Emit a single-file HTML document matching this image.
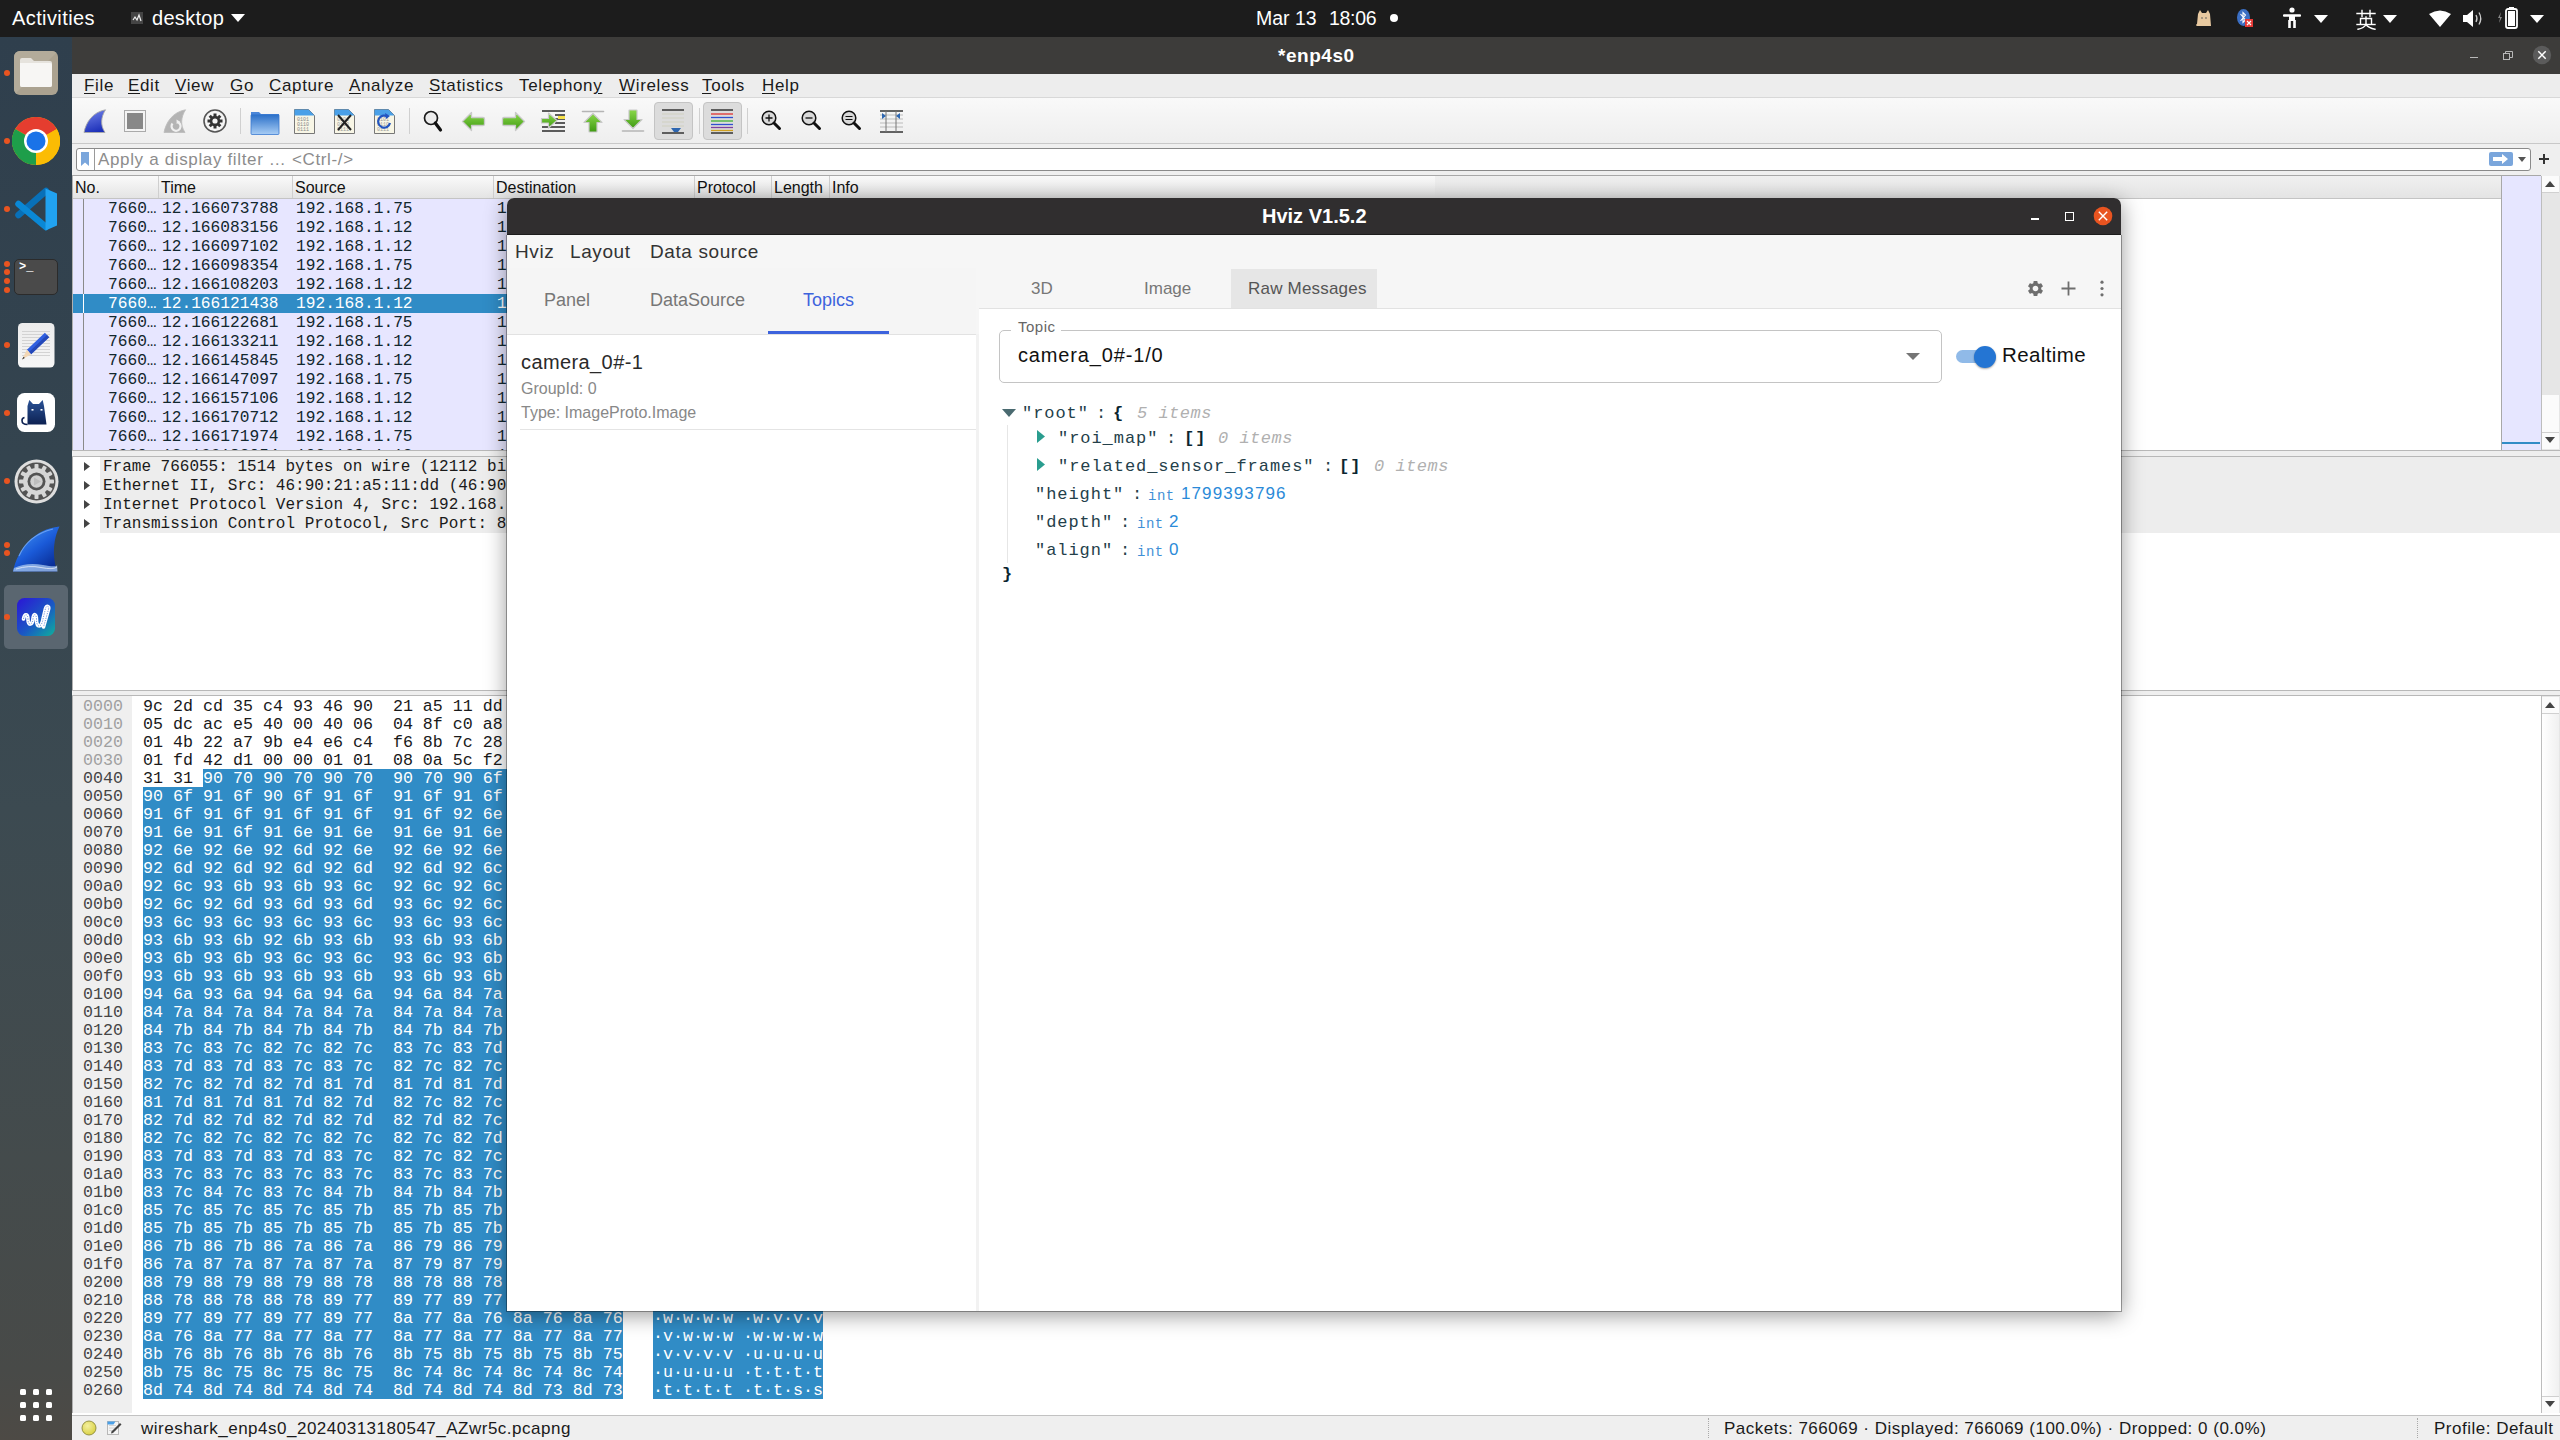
<!DOCTYPE html>
<html><head><meta charset="utf-8"><title>recreation</title>
<style>
*{margin:0;padding:0;box-sizing:border-box}
html,body{width:2560px;height:1440px;overflow:hidden;background:#fff;font-family:"Liberation Sans",sans-serif}
.abs{position:absolute}
/* top bar */
#topbar{position:absolute;left:0;top:0;width:2560px;height:37px;background:#1c1c1c;color:#fff}
#topbar .t{position:absolute;font-size:20px;line-height:37px;top:0;white-space:nowrap}
/* dock */
#dock{position:absolute;left:0;top:37px;width:72px;height:1403px;background:linear-gradient(#2f3f4d 0%,#34444f 30%,#3c4a51 55%,#444b4c 80%,#484a48 95%,#4d4a45 100%)}
.dot{position:absolute;width:6px;height:6px;border-radius:3px;background:#e95420;left:4px}
/* wireshark */
#ws{position:absolute;left:72px;top:37px;width:2488px;height:1403px;background:#fff}
#wstitle{position:absolute;left:0;top:0;width:2488px;height:37px;background:#3d3c3a;color:#fff;font-weight:bold;font-size:20px;text-align:center;line-height:37px}
#wsmenu{position:absolute;left:0;top:37px;width:2488px;height:24px;background:#ededed;border-bottom:1px solid #d8d8d8}
#wsmenu span{position:absolute;top:0;font-size:17px;letter-spacing:0.65px;line-height:24px;color:#1a1a1a;white-space:nowrap}
#wsmenu u{text-decoration:underline;text-decoration-thickness:1px;text-underline-offset:2px}
#wstool{position:absolute;left:0;top:61px;width:2488px;height:46px;background:linear-gradient(#f9f9f9,#eeeeee);border-bottom:1px solid #c8c8c8}
#wsfilter{position:absolute;left:0;top:107px;width:2488px;height:32px;background:#efefef}
.prow{position:absolute;left:0;width:1363px;height:19px;background:#e7e6ff;color:#12272e;font-family:"Liberation Mono",monospace;font-size:16.2px;line-height:19px;white-space:pre}
.prow.sel{background:#308cc6;color:#fff}
.prow span{position:absolute;top:1px}
.pn{left:35px}.pt{left:89px}.ps{left:223px}.pd{left:424px}
.hrow{position:absolute;left:72px;height:18px;font-family:"Liberation Mono",monospace;font-size:16.67px;line-height:18px;white-space:pre;color:#1a1a1a}
.hrow span{position:absolute;top:0}
.ho{left:11px;color:#454545}
.hol{color:#a0a0a0}
.hb{left:71px}
.hs{background:#308cc6;color:#fff;display:inline-block;height:18px;line-height:20px;vertical-align:top}
.hx{display:inline-block;height:18px;line-height:20px;vertical-align:top}
.as{left:581px;background:#308cc6;color:#fff;height:18px;line-height:20px}
.ho{line-height:20px}
.hb span{position:static !important}
/* hviz */
#hv{position:absolute;left:507px;top:198px;width:1614px;height:1113px;background:#fff;border-radius:7px 7px 0 0;box-shadow:0 4px 22px rgba(0,0,0,.42)}
#hvtitle{position:absolute;left:0;top:0;width:1614px;height:37px;background:#302e2f;border-radius:7px 7px 0 0;color:#fff;font-weight:bold;font-size:20px;text-align:center;line-height:37px}
.ph{position:absolute;top:177px;line-height:22px;font-size:16px;color:#111;white-space:nowrap}
.drow{position:absolute;left:103px;height:19px;line-height:19px;font-family:"Liberation Mono",monospace;font-size:16px;color:#1a1a1a;white-space:pre}
.st{position:absolute;top:1415px;line-height:27px;font-size:17px;letter-spacing:0.5px;color:#1a1a1a;white-space:nowrap}
.hm{position:absolute;top:235px;line-height:33px;font-size:19px;color:#333;white-space:nowrap;letter-spacing:0.6px}
.ht{position:absolute;font-size:18px;color:#777;white-space:nowrap}
.jl{position:absolute;font-family:"Liberation Mono",monospace;font-size:17.5px;line-height:22px;color:#2b3a42;white-space:pre;letter-spacing:0.6px}
.jl b{color:#111;font-weight:bold}
.jl i{color:#aaa;font-style:italic}
.ti{font-size:14px;color:#3a8ad0;letter-spacing:0.3px}
.tv{color:#2b8ad8}

.jk{position:absolute;font-family:"Liberation Mono",monospace;font-size:17px;line-height:16px;color:#24404a;white-space:pre;letter-spacing:0.95px}
.jb{color:#0b2530;font-weight:bold}
.ji{color:#b0b0b0;font-style:italic;letter-spacing:0.5px}
.jint{position:absolute;font-family:"Liberation Mono",monospace;font-size:14px;line-height:12px;color:#3f8fd6;letter-spacing:0.5px;white-space:pre}
.jv{position:absolute;font-family:"Liberation Sans",sans-serif;font-size:17px;line-height:16px;color:#2a8ad8;letter-spacing:1.1px;white-space:pre}

</style></head><body>
<div id="topbar">
  <div class="t" style="left:12px;letter-spacing:0.4px">Activities</div>
  <svg class="abs" style="left:131px;top:12px" width="12" height="12"><rect width="12" height="12" fill="#444"/><path d="M2 8l2-3 2 3 2-5 2 6" stroke="#eee" stroke-width="1.2" fill="none"/></svg>
  <div class="t" style="left:152px;letter-spacing:0.3px">desktop</div>
  <svg class="abs" style="left:231px;top:14px" width="14" height="9"><path d="M0 0h14L7 8z" fill="#fff"/></svg>
  <div class="t" style="left:1256px;font-size:19.5px;letter-spacing:0px">Mar 13</div><div class="t" style="left:1329px;font-size:19.5px;letter-spacing:-0.3px">18:06</div>
  <div class="abs" style="left:1390px;top:14px;width:8px;height:8px;border-radius:4px;background:#fff"></div>
  <!-- tray -->
  <svg class="abs" style="left:2194px;top:8px" width="20" height="20" viewBox="0 0 20 20"><path d="M3 18 Q1 17 3 16 L4 6 L6 2 L8 5 H12 L14 2 L16 6 L17 18 Z" fill="#e8c9a0"/><circle cx="8" cy="10" r="0.8" fill="#555"/><circle cx="12" cy="10" r="0.8" fill="#555"/></svg>
  <svg class="abs" style="left:2237px;top:9px" width="16" height="19" viewBox="0 0 16 19"><ellipse cx="6.5" cy="8.5" rx="6.5" ry="8.5" fill="#3b6fc4"/><path d="M3.5 5l5 6-2.5 2.5V3.5L8.5 6l-5 6" stroke="#fff" stroke-width="1.1" fill="none"/><rect x="8" y="10" width="8" height="8" fill="#e53935"/><path d="M10 12l4 4M14 12l-4 4" stroke="#fff" stroke-width="1.2"/></svg>
  <svg class="abs" style="left:2283px;top:7px" width="18" height="22" viewBox="0 0 18 22"><circle cx="9" cy="3" r="2.6" fill="#fff"/><path d="M1 8.5h16" stroke="#fff" stroke-width="2.4" stroke-linecap="round"/><path d="M6 8h6v6h-6z" fill="#fff"/><path d="M6.5 13v8M11.5 13v8" stroke="#fff" stroke-width="2.6"/></svg>
  <svg class="abs" style="left:2314px;top:15px" width="14" height="8"><path d="M0 0h14L7 8z" fill="#fff"/></svg>
  <svg class="abs" style="left:2356px;top:9px" width="20" height="21" viewBox="0 0 20 21"><g stroke="#fff" stroke-width="1.4" fill="none" stroke-linecap="square"><path d="M1 4.5H19M6 1.5V7.5M14 1.5V7.5"/><path d="M4.5 15V9.5H15.5V15M10 8V15"/><path d="M1 15.5H19"/><path d="M10 15.5Q8 19 2 20.2M10 15.5Q12.5 19 19 20.2"/></g></svg>
  <svg class="abs" style="left:2383px;top:15px" width="14" height="8"><path d="M0 0h14L7 8z" fill="#fff"/></svg>
  <svg class="abs" style="left:2429px;top:10px" width="22" height="18" viewBox="0 0 22 18"><path d="M0 4 Q11 -3 22 4 L11 17 Z" fill="#fff"/></svg>
  <svg class="abs" style="left:2463px;top:9px" width="22" height="19" viewBox="0 0 22 19"><path d="M0 6h4l6-5v17l-6-5H0z" fill="#fff"/><path d="M13 6q2 3.5 0 7M16 3.5q3.5 6 0 12" stroke="#ccc" stroke-width="1.3" fill="none"/></svg>
  <svg class="abs" style="left:2497px;top:6px" width="22" height="23" viewBox="0 0 22 23"><path d="M4 6l-3 6h2l-1 5 3-6H3z" fill="#888"/><rect x="9" y="3" width="11" height="19" rx="2" fill="none" stroke="#fff" stroke-width="1.8"/><rect x="12" y="1" width="5" height="2" fill="#fff"/><rect x="11" y="5" width="7" height="15" fill="#fff"/></svg>
  <svg class="abs" style="left:2530px;top:15px" width="14" height="8"><path d="M0 0h14L7 8z" fill="#fff"/></svg>
</div>
<div id="dock">
</div>
<!-- dock icons in page coords -->
<div class="dot" style="left:4px;top:70px"></div>
<svg class="abs" style="left:14px;top:51px" width="44" height="44" viewBox="0 0 44 44"><defs><clipPath id="fc"><rect width="44" height="44" rx="6"/></clipPath></defs><g clip-path="url(#fc)"><rect width="44" height="44" fill="#aba290"/><path d="M0 0H44L0 44z" fill="#b3ab9a"/></g><path d="M6 9 a2 2 0 0 1 2-2 h9 l3 3 h16 a2 2 0 0 1 2 2 v22 a2 2 0 0 1 -2 2 h-28 a2 2 0 0 1 -2 -2z" fill="#e6e3dd"/><path d="M6 12 h30 a2 2 0 0 1 2 2 v20 a2 2 0 0 1 -2 2 h-28 a2 2 0 0 1 -2 -2z" fill="#f7f6f4"/></svg>

<div class="dot" style="left:4px;top:138px"></div>
<svg class="abs" style="left:12px;top:117px" width="48" height="48" viewBox="0 0 48 48"><circle cx="24" cy="24" r="24" fill="#fbbc04"/><path d="M24 24 L3.2 12 A24 24 0 0 1 44.8 12 Z" fill="#e53d2f"/><path d="M24 24 L3.2 12 A24 24 0 0 0 24 48 Z" fill="#1e9e4a"/><path d="M24 24 L24 48 A24 24 0 0 0 44.8 12 Z" fill="#fbbc04"/><circle cx="24" cy="24" r="12" fill="#fff"/><circle cx="24" cy="24" r="9.5" fill="#1a73e8"/></svg>

<div class="dot" style="left:4px;top:206px"></div>
<svg class="abs" style="left:14px;top:187px" width="45" height="45" viewBox="0 0 45 45"><path d="M32 4 L4.5 28" stroke="#0870b8" stroke-width="6.5" stroke-linecap="round"/><path d="M32 40 L4.5 17" stroke="#0a88d6" stroke-width="6.5" stroke-linecap="round"/><path d="M31.5 1.5 L43 6.5 V38.5 L31.5 43.5 Z" fill="#21a2f0"/></svg>

<div class="dot" style="left:4px;top:261px"></div>
<div class="dot" style="left:4px;top:269px"></div>
<div class="dot" style="left:4px;top:278px"></div>
<div class="dot" style="left:4px;top:287px"></div>
<div class="abs" style="left:14px;top:259px;width:44px;height:36px;background:#4a4a4a;border:1px solid #2b2b2b;border-radius:5px"></div>
<div class="abs" style="left:19px;top:259px;color:#fff;font-family:'Liberation Mono',monospace;font-size:12px;line-height:16px;font-weight:bold">&gt;_</div>

<div class="dot" style="left:4px;top:342px"></div>
<svg class="abs" style="left:18px;top:323px" width="37" height="45" viewBox="0 0 37 45"><defs><linearGradient id="pap" x1="0" y1="0" x2="0" y2="1"><stop offset="0" stop-color="#ececec"/><stop offset="1" stop-color="#f6f6f6"/></linearGradient></defs><rect x="0" y="0" width="36.5" height="44.5" rx="4.5" fill="url(#pap)"/><g stroke="#cfcfcf" stroke-width="0.9"><path d="M4 8.5h28M4 11.5h28M4 14.5h28M4 17.5h28M4 20.5h28M4 23.5h28M4 26.5h28M4 29.5h28M4 32.5h28"/></g><path d="M8.9 26.8 L26.9 9.8 L31.1 14.2 L13.1 31.2 Z" fill="#2f5fe0"/><path d="M11 29 L29 12 L31.1 14.2 L13.1 31.2 Z" fill="#2448b8"/><path d="M8.9 26.8 L13.1 31.2 L4 36.5 Z" fill="#f3d7b5"/><path d="M4 36.5 L5.6 33.8 L6.8 35 Z" fill="#333"/></svg>

<div class="dot" style="left:4px;top:410px"></div>
<svg class="abs" style="left:17px;top:393px" width="38" height="39" viewBox="0 0 38 39"><defs><linearGradient id="catg" x1="0" y1="0" x2="0" y2="1"><stop offset="0" stop-color="#2a5296"/><stop offset="1" stop-color="#0d2152"/></linearGradient></defs><rect width="38" height="39" rx="7.5" fill="#fff"/><path d="M10.5 31.5 V13 L12.3 7 L16 11 H22 L25.7 7 L27 13 L29.5 31.5 Z" fill="url(#catg)"/><path d="M10.5 31.5 Q5 31.5 5 27.5 Q5 25 7.5 24.5" stroke="#0d2152" stroke-width="1.6" fill="none"/><rect x="14.5" y="16" width="2" height="1.6" fill="#fff"/><rect x="23.5" y="16" width="2" height="1.6" fill="#fff"/></svg>

<div class="dot" style="left:4px;top:478px"></div>
<svg class="abs" style="left:14px;top:459px" width="45" height="45" viewBox="0 0 45 45"><circle cx="22.5" cy="22.5" r="22" fill="#dedede"/><circle cx="22.5" cy="22.5" r="19" fill="#535353"/><g transform="translate(22.5 22.5)" fill="#d6d6d6"><circle r="13.5"/><rect x="-2" y="-17.5" width="4" height="5" rx="0.8" transform="rotate(0)"/><rect x="-2" y="-17.5" width="4" height="5" rx="0.8" transform="rotate(30)"/><rect x="-2" y="-17.5" width="4" height="5" rx="0.8" transform="rotate(60)"/><rect x="-2" y="-17.5" width="4" height="5" rx="0.8" transform="rotate(90)"/><rect x="-2" y="-17.5" width="4" height="5" rx="0.8" transform="rotate(120)"/><rect x="-2" y="-17.5" width="4" height="5" rx="0.8" transform="rotate(150)"/><rect x="-2" y="-17.5" width="4" height="5" rx="0.8" transform="rotate(180)"/><rect x="-2" y="-17.5" width="4" height="5" rx="0.8" transform="rotate(210)"/><rect x="-2" y="-17.5" width="4" height="5" rx="0.8" transform="rotate(240)"/><rect x="-2" y="-17.5" width="4" height="5" rx="0.8" transform="rotate(270)"/><rect x="-2" y="-17.5" width="4" height="5" rx="0.8" transform="rotate(300)"/><rect x="-2" y="-17.5" width="4" height="5" rx="0.8" transform="rotate(330)"/></g><circle cx="22.5" cy="22.5" r="9" fill="#535353"/><circle cx="22.5" cy="22.5" r="6.2" fill="#d0d0d0"/><path d="M20 18.5 L27 22.5 L20 26.5z" fill="#bdbdbd"/></svg>

<div class="dot" style="left:4px;top:542px"></div>
<div class="dot" style="left:4px;top:550px"></div>
<svg class="abs" style="left:13px;top:526px" width="47" height="46" viewBox="0 0 47 46"><defs><linearGradient id="fin" x1="0.2" y1="0.1" x2="0.8" y2="0.9"><stop offset="0" stop-color="#3d8cf0"/><stop offset=".5" stop-color="#1a5ad8"/><stop offset="1" stop-color="#0a2f98"/></linearGradient></defs><path d="M0 45.5 C5 22 22 3 46.5 0.5 C41 11 38.5 28 44 45.5 Z" fill="url(#fin)"/><path d="M6 30 C12 16 24 7 40 3" stroke="#8fc0ff" stroke-width="1.2" fill="none" opacity=".6"/><path d="M1 42 Q14 36 30 39 T44 38 L44.5 45.5 L0 45.5z" fill="#a8c8f0" opacity=".75"/><path d="M3 43 Q16 39 28 41.5 T44 41" stroke="#fff" stroke-width="0.8" fill="none" opacity=".8"/></svg>

<div class="abs" style="left:4px;top:585px;width:64px;height:64px;border-radius:5px;background:#5a6670"></div>
<div class="dot" style="left:4px;top:614px"></div>
<svg class="abs" style="left:17px;top:598px" width="38" height="38" viewBox="0 0 38 38"><defs><linearGradient id="hvg" x1="0" y1="0" x2="1" y2="1"><stop offset="0" stop-color="#2b14d6"/><stop offset=".55" stop-color="#1a58c4"/><stop offset="1" stop-color="#0fb09c"/></linearGradient></defs><rect width="38" height="38" rx="7.5" fill="url(#hvg)"/><path d="M6.5 21 C7.5 15, 11 15.5, 11 21.5 C11 28, 15.5 27.5, 16 20.5 C16.5 15, 19.5 15.5, 19.5 21.5 C19.5 30, 24.5 30.5, 26 21 L28.5 10.5 C29.5 7, 32.5 8, 31.5 11.5 L26.5 29" stroke="#fff" stroke-width="3.6" fill="none" stroke-linecap="round" stroke-linejoin="round"/><path d="M6.5 21 C7.5 15, 11 15.5, 11 21.5 C11 28, 15.5 27.5, 16 20.5 C16.5 15, 19.5 15.5, 19.5 21.5 C19.5 30, 24.5 30.5, 26 21 L28.5 10.5 C29.5 7, 32.5 8, 31.5 11.5 L26.5 29" stroke="#3a6ad0" stroke-width="0.7" stroke-dasharray="1.2 1.2" fill="none"/></svg>

<svg class="abs" style="left:20px;top:1389px" width="33" height="33" viewBox="0 0 33 33"><g fill="#fff"><rect x="0" y="0" width="6" height="6" rx="1.5"/><rect x="13" y="0" width="6" height="6" rx="1.5"/><rect x="26" y="0" width="6" height="6" rx="1.5"/><rect x="0" y="13" width="6" height="6" rx="1.5"/><rect x="13" y="13" width="6" height="6" rx="1.5"/><rect x="26" y="13" width="6" height="6" rx="1.5"/><rect x="0" y="26" width="6" height="6" rx="1.5"/><rect x="13" y="26" width="6" height="6" rx="1.5"/><rect x="26" y="26" width="6" height="6" rx="1.5"/></g></svg>
<div class="abs" style="left:72px;top:37px;width:2488px;height:1403px;background:#fff"></div>
<!-- title bar -->
<div class="abs" style="left:72px;top:37px;width:2488px;height:37px;background:#3d3c3a"></div>
<div class="abs" style="left:1278px;top:37px;line-height:37px;color:#fff;font-weight:bold;font-size:19px;letter-spacing:0.55px">*enp4s0</div>
<div class="abs" style="left:2470px;top:57px;width:8px;height:1px;background:#b8b8b8"></div>
<svg class="abs" style="left:2502px;top:50px" width="12" height="11" viewBox="0 0 12 11"><rect x="1.5" y="3.5" width="6" height="6" fill="none" stroke="#b8b8b8" stroke-width="1"/><path d="M3.5 3.5V1.5H10.5V7.5H7.5" fill="none" stroke="#b8b8b8" stroke-width="1"/></svg>
<svg class="abs" style="left:2532px;top:45px" width="20" height="20" viewBox="0 0 20 20"><circle cx="10" cy="10" r="9.2" fill="#5b5b5b"/><path d="M6.3 6.3l7.4 7.4M13.7 6.3l-7.4 7.4" stroke="#fff" stroke-width="1.5"/></svg>
<!-- menu -->
<div id="wsmenu" style="left:72px;top:74px">
<span style="left:12px"><u>F</u>ile</span>
<span style="left:56px"><u>E</u>dit</span>
<span style="left:103px"><u>V</u>iew</span>
<span style="left:158px"><u>G</u>o</span>
<span style="left:197px"><u>C</u>apture</span>
<span style="left:277px"><u>A</u>nalyze</span>
<span style="left:357px"><u>S</u>tatistics</span>
<span style="left:447px">Telephon<u>y</u></span>
<span style="left:547px"><u>W</u>ireless</span>
<span style="left:630px"><u>T</u>ools</span>
<span style="left:690px"><u>H</u>elp</span>
</div>
<!-- toolbar -->
<div id="wstool" style="left:72px;top:98px"></div>
<!-- TOOLBAR ICONS -->
<div class="abs" style="left:654px;top:102px;width:39px;height:38px;border:1px solid #c4c4c4;border-radius:4px;background:#dcdcdc"></div>
<div class="abs" style="left:703px;top:102px;width:39px;height:38px;border:1px solid #c4c4c4;border-radius:4px;background:#dcdcdc"></div>
<div class="abs" style="left:240px;top:108px;width:1px;height:26px;background:#d0d0d0"></div>
<div class="abs" style="left:409px;top:108px;width:1px;height:26px;background:#d0d0d0"></div>
<div class="abs" style="left:699px;top:108px;width:1px;height:26px;background:#d0d0d0"></div>
<div class="abs" style="left:747px;top:108px;width:1px;height:26px;background:#d0d0d0"></div>
<svg class="abs" style="left:83px;top:109px" width="24" height="25" viewBox="0 0 24 25"><defs><linearGradient id="sf1" x1="0.3" y1="0" x2="0.6" y2="1"><stop offset="0" stop-color="#6f80e8"/><stop offset="1" stop-color="#1b2fb8"/></linearGradient></defs><path d="M1 23.5 C3 13 10 3 22.5 0.8 C18 8 17 16 22 23.5 Z" fill="url(#sf1)" stroke="#a8a8a8" stroke-width="0.9" stroke-linejoin="round"/></svg>
<svg class="abs" style="left:124px;top:110px" width="22" height="22" viewBox="0 0 22 22"><rect x="0.5" y="0.5" width="21" height="21" fill="#f4f4f4" stroke="#aaa"/><rect x="3" y="3" width="16" height="16" fill="#888"/></svg>
<svg class="abs" style="left:163px;top:109px" width="24" height="25" viewBox="0 0 24 25"><path d="M1 23.5 C3 13 10 3 22.5 0.8 C18 8 17 16 22 23.5 Z" fill="#b4b4b4" stroke="#bdbdbd" stroke-width="0.9" stroke-linejoin="round"/><path d="M9.5 14.5 a4.5 4.5 0 1 0 6 -1" stroke="#f0f0f0" stroke-width="2.2" fill="none"/><path d="M13.5 10.5 l4 2.5 -3.8 2z" fill="#f0f0f0"/></svg>
<svg class="abs" style="left:203px;top:109px" width="24" height="24" viewBox="0 0 24 24"><circle cx="12" cy="12" r="11" fill="#f5f5f5" stroke="#555" stroke-width="1.6"/><g transform="translate(12 12)" fill="#333"><circle r="5.2"/><rect x="-1.5" y="-7.5" width="3" height="15"/><rect x="-1.5" y="-7.5" width="3" height="15" transform="rotate(45)"/><rect x="-1.5" y="-7.5" width="3" height="15" transform="rotate(90)"/><rect x="-1.5" y="-7.5" width="3" height="15" transform="rotate(135)"/></g><circle cx="12" cy="12" r="2.6" fill="#f5f5f5"/></svg>
<svg class="abs" style="left:250px;top:110px" width="30" height="25" viewBox="0 0 30 25"><defs><linearGradient id="fold" x1="0" y1="0" x2="0" y2="1"><stop offset="0" stop-color="#2a6fc8"/><stop offset="1" stop-color="#a8cdf5"/></linearGradient></defs><path d="M1 2h8l2 2h18v20H1z" fill="#4a86d8"/><rect x="1" y="4.5" width="28" height="20" rx="1" fill="url(#fold)" stroke="#3a7ad0" stroke-width="0.8"/></svg>
<svg class="abs" style="left:294px;top:109px" width="21" height="25" viewBox="0 0 21 25"><path d="M0.5 0.5h14l6 6v18H0.5z" fill="#f8f6e6" stroke="#777"/><path d="M0.5 0.5h14l6 6H0.5z" fill="#4aa0e8"/><g fill="#888" font-size="5" font-family="Liberation Mono"><text x="3" y="12">0101</text><text x="3" y="17">0110</text><text x="3" y="22">0111</text></g></svg>
<svg class="abs" style="left:334px;top:109px" width="21" height="25" viewBox="0 0 21 25"><path d="M0.5 0.5h14l6 6v18H0.5z" fill="#f8f6e6" stroke="#777"/><path d="M0.5 0.5h14l6 6H0.5z" fill="#4aa0e8"/><g fill="#999" font-size="5" font-family="Liberation Mono"><text x="3" y="12">0101</text><text x="3" y="17">0110</text><text x="3" y="22">0111</text></g><path d="M4 6l13 15M17 6L4 21" stroke="#222" stroke-width="2"/></svg>
<svg class="abs" style="left:374px;top:109px" width="21" height="25" viewBox="0 0 21 25"><path d="M0.5 0.5h14l6 6v18H0.5z" fill="#f8f6e6" stroke="#777"/><path d="M0.5 0.5h14l6 6H0.5z" fill="#4aa0e8"/><g fill="#999" font-size="5" font-family="Liberation Mono"><text x="3" y="12">0101</text><text x="3" y="17">0110</text><text x="3" y="22">0111</text></g><path d="M14 8 a6 6 0 1 0 2 6" stroke="#2255c0" stroke-width="2.2" fill="none"/><path d="M11 4l5 3-4 3z" fill="#2255c0"/></svg>
<svg class="abs" style="left:423px;top:110px" width="20" height="23" viewBox="0 0 20 23"><circle cx="8" cy="8" r="6.5" fill="#ececec" stroke="#1a1a1a" stroke-width="1.7"/><path d="M12.3 13 l5.2 7" stroke="#111" stroke-width="3.2" stroke-linecap="round"/></svg>
<svg class="abs" style="left:461px;top:111px" width="25" height="21" viewBox="0 0 25 21"><defs><linearGradient id="g1" x1="0" y1="0" x2="0" y2="1"><stop offset="0" stop-color="#8ad84a"/><stop offset="1" stop-color="#3f9a12"/></linearGradient></defs><path d="M1.5 10.5 L10.5 1.5 V6.5 H22 Q23.5 6.5 23.5 8 V13 Q23.5 14.5 22 14.5 H10.5 V19.5 Z" fill="url(#g1)" stroke="#c9c9c9" stroke-width="1.3" stroke-linejoin="round"/></svg>
<svg class="abs" style="left:501px;top:111px" width="25" height="21" viewBox="0 0 25 21"><defs><linearGradient id="g2" x1="0" y1="0" x2="0" y2="1"><stop offset="0" stop-color="#8ad84a"/><stop offset="1" stop-color="#3f9a12"/></linearGradient></defs><path d="M23.5 10.5 L14.5 1.5 V6.5 H3 Q1.5 6.5 1.5 8 V13 Q1.5 14.5 3 14.5 H14.5 V19.5 Z" fill="url(#g2)" stroke="#c9c9c9" stroke-width="1.3" stroke-linejoin="round"/></svg>
<svg class="abs" style="left:540px;top:109px" width="26" height="25" viewBox="0 0 26 25"><defs><linearGradient id="g5" x1="0" y1="0" x2="0" y2="1"><stop offset="0" stop-color="#8ad84a"/><stop offset="1" stop-color="#3f9a12"/></linearGradient></defs><g stroke="#2a2a2a" stroke-width="1.3"><path d="M2 2h23M15 6h10M15 10h10M15 14h10M2 18h23M2 22h23"/></g><rect x="18" y="7" width="7" height="3" fill="#f7e24a"/><path d="M1.5 9.5 H8.5 V4 L17 11.5 L8.5 19 V14 H1.5 Z" fill="url(#g5)" stroke="#c9c9c9" stroke-width="1.2" stroke-linejoin="round"/></svg>
<svg class="abs" style="left:581px;top:110px" width="24" height="23" viewBox="0 0 24 23"><defs><linearGradient id="g3" x1="0" y1="0" x2="0" y2="1"><stop offset="0" stop-color="#8ad84a"/><stop offset="1" stop-color="#3f9a12"/></linearGradient></defs><path d="M1.5 1.5h21" stroke="#b5b5b5" stroke-width="1.6" stroke-linecap="round"/><path d="M12 3.5 L21 12.5 H16 V21.5 Q16 22 15.5 22 H8.5 Q8 22 8 21.5 V12.5 H3 Z" fill="url(#g3)" stroke="#c9c9c9" stroke-width="1.2" stroke-linejoin="round"/></svg>
<svg class="abs" style="left:621px;top:109px" width="24" height="24" viewBox="0 0 24 24"><defs><linearGradient id="g4" x1="0" y1="0" x2="0" y2="1"><stop offset="0" stop-color="#8ad84a"/><stop offset="1" stop-color="#3f9a12"/></linearGradient></defs><path d="M1.5 22h21" stroke="#b5b5b5" stroke-width="1.6" stroke-linecap="round"/><path d="M12 19.5 L21 10.5 H16 V1.5 Q16 1 15.5 1 H8.5 Q8 1 8 1.5 V10.5 H3 Z" fill="url(#g4)" stroke="#c9c9c9" stroke-width="1.2" stroke-linejoin="round"/></svg>
<svg class="abs" style="left:661px;top:109px" width="24" height="25" viewBox="0 0 24 25"><path d="M1 1h22M1 24h22" stroke="#333" stroke-width="1.5"/><path d="M1 5h22M1 9h22M1 13h22M1 17h22" stroke="#d0d0c0" stroke-width="1.2"/><path d="M10 19h10l-3 4h-4z" fill="#2d66b0"/></svg>
<svg class="abs" style="left:710px;top:109px" width="24" height="25" viewBox="0 0 24 25"><path d="M1 1h22M1 24h22" stroke="#333" stroke-width="1.5"/><path d="M1 5h22" stroke="#e03030" stroke-width="1.3"/><path d="M1 8.5h22" stroke="#3050d0" stroke-width="1.3"/><path d="M1 12h22" stroke="#40b030" stroke-width="1.3"/><path d="M1 15.5h22" stroke="#3050d0" stroke-width="1.3"/><path d="M1 18.5h22" stroke="#8040a0" stroke-width="1.3"/><path d="M1 21.5h22" stroke="#d0a020" stroke-width="1.3"/></svg>
<svg class="abs" style="left:761px;top:110px" width="21" height="21" viewBox="0 0 21 21"><circle cx="8" cy="8" r="6.8" fill="#d9d9d9" stroke="#111" stroke-width="1.5"/><path d="M4.5 8h7M8 4.5v7" stroke="#111" stroke-width="1.3"/><path d="M13 13l5.5 5.5" stroke="#111" stroke-width="3" stroke-linecap="round"/></svg>
<svg class="abs" style="left:801px;top:110px" width="21" height="21" viewBox="0 0 21 21"><circle cx="8" cy="8" r="6.8" fill="#d9d9d9" stroke="#111" stroke-width="1.5"/><path d="M4.5 8h7" stroke="#111" stroke-width="1.3"/><path d="M13 13l5.5 5.5" stroke="#111" stroke-width="3" stroke-linecap="round"/></svg>
<svg class="abs" style="left:841px;top:110px" width="21" height="21" viewBox="0 0 21 21"><circle cx="8" cy="8" r="6.8" fill="#d9d9d9" stroke="#111" stroke-width="1.5"/><path d="M4.5 6.5h7M4.5 9.5h7" stroke="#111" stroke-width="1.2"/><path d="M13 13l5.5 5.5" stroke="#111" stroke-width="3" stroke-linecap="round"/></svg>
<svg class="abs" style="left:880px;top:110px" width="23" height="23" viewBox="0 0 23 23"><path d="M0 1h23M0 22h23" stroke="#333" stroke-width="1.3"/><path d="M0 5h23M0 9h23M0 13h23M0 17h23" stroke="#bbb" stroke-width="1"/><path d="M6 1v21M16 1v21" stroke="#777" stroke-width="1"/><path d="M2 3v6l4-3zM20 3v6l-4-3z" fill="#2d66b0"/></svg>
<!-- filter -->
<div class="abs" style="left:72px;top:144px;width:2488px;height:32px;background:#efefef"></div>
<div class="abs" style="left:76px;top:148px;width:2455px;height:23px;background:#fff;border:1px solid #8a8a8a;border-radius:3px"></div>
<div class="abs" style="left:94px;top:149px;width:1px;height:21px;background:#9a9a9a"></div>
<svg class="abs" style="left:81px;top:152px" width="8" height="14" viewBox="0 0 8 14"><path d="M0 0h8v14l-4-3.5L0 14z" fill="#7aa6dc"/></svg>
<div class="abs" style="left:98px;top:148px;line-height:23px;font-size:17px;color:#8c8c8c;white-space:nowrap;letter-spacing:0.65px">Apply a display filter … &lt;Ctrl-/&gt;</div>
<svg class="abs" style="left:2489px;top:152px" width="24" height="14" viewBox="0 0 24 14"><rect width="24" height="14" rx="2" fill="#7aa6dc"/><path d="M4 5h9V2l6 5-6 5V9H4z" fill="#fff"/></svg>
<svg class="abs" style="left:2518px;top:157px" width="8" height="5"><path d="M0 0h8L4 5z" fill="#555"/></svg>
<svg class="abs" style="left:2538px;top:153px" width="12" height="12"><path d="M6 1v10M1 6h10" stroke="#333" stroke-width="2"/></svg>
<!-- packet list -->
<div class="abs" style="left:72px;top:175px;width:2469px;height:1px;background:#a8a8a8"></div>
<div class="abs" style="left:72px;top:176px;width:2429px;height:23px;background:linear-gradient(#fafafa,#e4e4e4);border-bottom:1px solid #c4c4c4"></div>
<div class="abs" style="left:1435px;top:176px;width:1066px;height:22px;background:linear-gradient(#f0f0f0,#e4e4e4)"></div>
<div class="abs" style="left:158px;top:176px;width:1px;height:22px;background:#cfcfcf"></div>
<div class="abs" style="left:292px;top:176px;width:1px;height:22px;background:#cfcfcf"></div>
<div class="abs" style="left:493px;top:176px;width:1px;height:22px;background:#cfcfcf"></div>
<div class="abs" style="left:694px;top:176px;width:1px;height:22px;background:#cfcfcf"></div>
<div class="abs" style="left:771px;top:176px;width:1px;height:22px;background:#cfcfcf"></div>
<div class="abs" style="left:829px;top:176px;width:1px;height:22px;background:#cfcfcf"></div>
<div class="abs ph" style="left:75px">No.</div>
<div class="abs ph" style="left:161px">Time</div>
<div class="abs ph" style="left:295px">Source</div>
<div class="abs ph" style="left:496px">Destination</div>
<div class="abs ph" style="left:697px">Protocol</div>
<div class="abs ph" style="left:774px">Length</div>
<div class="abs ph" style="left:832px">Info</div>
<div class="abs" style="left:73px;top:199px;width:2428px;height:251px;overflow:hidden">
<div class="prow" style="top:0px"><span class="pn">7660…</span><span class="pt">12.166073788</span><span class="ps">192.168.1.75</span><span class="pd">192.168.1.12</span></div>
<div class="prow" style="top:19px"><span class="pn">7660…</span><span class="pt">12.166083156</span><span class="ps">192.168.1.12</span><span class="pd">192.168.1.12</span></div>
<div class="prow" style="top:38px"><span class="pn">7660…</span><span class="pt">12.166097102</span><span class="ps">192.168.1.12</span><span class="pd">192.168.1.12</span></div>
<div class="prow" style="top:57px"><span class="pn">7660…</span><span class="pt">12.166098354</span><span class="ps">192.168.1.75</span><span class="pd">192.168.1.12</span></div>
<div class="prow" style="top:76px"><span class="pn">7660…</span><span class="pt">12.166108203</span><span class="ps">192.168.1.12</span><span class="pd">192.168.1.12</span></div>
<div class="prow sel" style="top:95px"><span class="pn">7660…</span><span class="pt">12.166121438</span><span class="ps">192.168.1.12</span><span class="pd">192.168.1.12</span></div>
<div class="prow" style="top:114px"><span class="pn">7660…</span><span class="pt">12.166122681</span><span class="ps">192.168.1.75</span><span class="pd">192.168.1.12</span></div>
<div class="prow" style="top:133px"><span class="pn">7660…</span><span class="pt">12.166133211</span><span class="ps">192.168.1.12</span><span class="pd">192.168.1.12</span></div>
<div class="prow" style="top:152px"><span class="pn">7660…</span><span class="pt">12.166145845</span><span class="ps">192.168.1.12</span><span class="pd">192.168.1.12</span></div>
<div class="prow" style="top:171px"><span class="pn">7660…</span><span class="pt">12.166147097</span><span class="ps">192.168.1.75</span><span class="pd">192.168.1.12</span></div>
<div class="prow" style="top:190px"><span class="pn">7660…</span><span class="pt">12.166157106</span><span class="ps">192.168.1.12</span><span class="pd">192.168.1.12</span></div>
<div class="prow" style="top:209px"><span class="pn">7660…</span><span class="pt">12.166170712</span><span class="ps">192.168.1.12</span><span class="pd">192.168.1.12</span></div>
<div class="prow" style="top:228px"><span class="pn">7660…</span><span class="pt">12.166171974</span><span class="ps">192.168.1.75</span><span class="pd">192.168.1.12</span></div>
<div class="prow" style="top:247px"><span class="pn">7660…</span><span class="pt">12.166183054</span><span class="ps">192.168.1.12</span><span class="pd">192.168.1.12</span></div>
</div>
<div class="abs" style="left:83px;top:199px;width:1px;height:251px;background:#8a8a8a"></div>
<div class="abs" style="left:83px;top:294px;width:1px;height:19px;background:#fff"></div><div class="abs" style="left:72px;top:176px;width:1px;height:274px;background:#b0b0b0"></div>
<div class="abs" style="left:2501px;top:176px;width:40px;height:274px;background:#e6e6ff;border-left:1px solid #a8a8a8"></div>
<div class="abs" style="left:2502px;top:442px;width:38px;height:2px;background:#308cc6"></div>
<div class="abs" style="left:2541px;top:176px;width:19px;height:274px;background:#e6e6e6;border-left:1px solid #bdbdbd"></div>
<div class="abs" style="left:2542px;top:176px;width:17px;height:17px;background:#fbfbfb;border-bottom:1px solid #d0d0d0"></div>
<svg class="abs" style="left:2545px;top:181px" width="10" height="6"><path d="M0 6h10L5 0z" fill="#444"/></svg>
<div class="abs" style="left:2542px;top:395px;width:17px;height:37px;background:#fbfbfb"></div>
<div class="abs" style="left:2542px;top:432px;width:17px;height:17px;background:#fbfbfb;border-top:1px solid #d0d0d0"></div>
<svg class="abs" style="left:2545px;top:437px" width="10" height="6"><path d="M0 0h10L5 6z" fill="#444"/></svg>
<!-- splitter 1 -->
<div class="abs" style="left:72px;top:450px;width:2488px;height:7px;background:#efefef;border-top:1px solid #b8b8b8;border-bottom:1px solid #b8b8b8"></div>
<!-- detail -->
<div class="abs" style="left:100px;top:457px;width:2460px;height:76px;background:#ededed"></div>
<div class="drow" style="top:458px">Frame 766055: 1514 bytes on wire (12112 bits), 1514 bytes captured (12112 bits) on interface enp4s0, id 0</div>
<div class="drow" style="top:477px">Ethernet II, Src: 46:90:21:a5:11:dd (46:90:21:a5:11:dd), Dst: 9c:2d:cd:35:c4:93 (9c:2d:cd:35:c4:93)</div>
<div class="drow" style="top:496px">Internet Protocol Version 4, Src: 192.168.1.12, Dst: 192.168.1.75</div>
<div class="drow" style="top:515px">Transmission Control Protocol, Src Port: 8080, Dst Port: 52306, Seq: 1, Ack: 1, Len: 1448</div>
<svg class="abs" style="left:84px;top:462px" width="6" height="9"><path d="M0 0v9l6-4.5z" fill="#444"/></svg>
<svg class="abs" style="left:84px;top:481px" width="6" height="9"><path d="M0 0v9l6-4.5z" fill="#444"/></svg>
<svg class="abs" style="left:84px;top:500px" width="6" height="9"><path d="M0 0v9l6-4.5z" fill="#444"/></svg>
<svg class="abs" style="left:84px;top:519px" width="6" height="9"><path d="M0 0v9l6-4.5z" fill="#444"/></svg>
<div class="abs" style="left:72px;top:457px;width:1px;height:233px;background:#b0b0b0"></div>
<!-- splitter 2 -->
<div class="abs" style="left:72px;top:690px;width:2488px;height:6px;background:#efefef;border-top:1px solid #b8b8b8;border-bottom:1px solid #b8b8b8"></div>
<!-- hex -->
<div class="abs" style="left:72px;top:696px;width:60px;height:717px;background:#efefef"></div>
<div class="hrow" style="top:697px"><span class="ho hol">0000</span><span class="hb"><span class="hx">9c 2d cd 35 c4 93 46 90  21 a5 11 dd 11 dd 11 dd</span></span></div>
<div class="hrow" style="top:715px"><span class="ho hol">0010</span><span class="hb"><span class="hx">05 dc ac e5 40 00 40 06  04 8f c0 a8 c0 a8 c0 a8</span></span></div>
<div class="hrow" style="top:733px"><span class="ho hol">0020</span><span class="hb"><span class="hx">01 4b 22 a7 9b e4 e6 c4  f6 8b 7c 28 7c 28 7c 28</span></span></div>
<div class="hrow" style="top:751px"><span class="ho hol">0030</span><span class="hb"><span class="hx">01 fd 42 d1 00 00 01 01  08 0a 5c f2 5c f2 5c f2</span></span></div>
<div class="hrow" style="top:769px"><span class="ho">0040</span><span class="hb"><span class="hx">31 31 </span><span class="hs">90 70 90 70 90 70  90 70 90 6f 90 6f 90 6f</span></span></div>
<div class="hrow" style="top:787px"><span class="ho">0050</span><span class="hb"><span class="hs">90 6f 91 6f 90 6f 91 6f  91 6f 91 6f 91 6f 91 6f</span></span></div>
<div class="hrow" style="top:805px"><span class="ho">0060</span><span class="hb"><span class="hs">91 6f 91 6f 91 6f 91 6f  91 6f 92 6e 92 6e 92 6e</span></span></div>
<div class="hrow" style="top:823px"><span class="ho">0070</span><span class="hb"><span class="hs">91 6e 91 6f 91 6e 91 6e  91 6e 91 6e 91 6e 91 6e</span></span></div>
<div class="hrow" style="top:841px"><span class="ho">0080</span><span class="hb"><span class="hs">92 6e 92 6e 92 6d 92 6e  92 6e 92 6e 92 6e 92 6e</span></span></div>
<div class="hrow" style="top:859px"><span class="ho">0090</span><span class="hb"><span class="hs">92 6d 92 6d 92 6d 92 6d  92 6d 92 6c 92 6c 92 6c</span></span></div>
<div class="hrow" style="top:877px"><span class="ho">00a0</span><span class="hb"><span class="hs">92 6c 93 6b 93 6b 93 6c  92 6c 92 6c 92 6c 92 6c</span></span></div>
<div class="hrow" style="top:895px"><span class="ho">00b0</span><span class="hb"><span class="hs">92 6c 92 6d 93 6d 93 6d  93 6c 92 6c 92 6c 92 6c</span></span></div>
<div class="hrow" style="top:913px"><span class="ho">00c0</span><span class="hb"><span class="hs">93 6c 93 6c 93 6c 93 6c  93 6c 93 6c 93 6c 93 6c</span></span></div>
<div class="hrow" style="top:931px"><span class="ho">00d0</span><span class="hb"><span class="hs">93 6b 93 6b 92 6b 93 6b  93 6b 93 6b 93 6b 93 6b</span></span></div>
<div class="hrow" style="top:949px"><span class="ho">00e0</span><span class="hb"><span class="hs">93 6b 93 6b 93 6c 93 6c  93 6c 93 6b 93 6b 93 6b</span></span></div>
<div class="hrow" style="top:967px"><span class="ho">00f0</span><span class="hb"><span class="hs">93 6b 93 6b 93 6b 93 6b  93 6b 93 6b 93 6b 93 6b</span></span></div>
<div class="hrow" style="top:985px"><span class="ho">0100</span><span class="hb"><span class="hs">94 6a 93 6a 94 6a 94 6a  94 6a 84 7a 84 7a 84 7a</span></span></div>
<div class="hrow" style="top:1003px"><span class="ho">0110</span><span class="hb"><span class="hs">84 7a 84 7a 84 7a 84 7a  84 7a 84 7a 84 7a 84 7a</span></span></div>
<div class="hrow" style="top:1021px"><span class="ho">0120</span><span class="hb"><span class="hs">84 7b 84 7b 84 7b 84 7b  84 7b 84 7b 84 7b 84 7b</span></span></div>
<div class="hrow" style="top:1039px"><span class="ho">0130</span><span class="hb"><span class="hs">83 7c 83 7c 82 7c 82 7c  83 7c 83 7d 83 7d 83 7d</span></span></div>
<div class="hrow" style="top:1057px"><span class="ho">0140</span><span class="hb"><span class="hs">83 7d 83 7d 83 7c 83 7c  82 7c 82 7c 82 7c 82 7c</span></span></div>
<div class="hrow" style="top:1075px"><span class="ho">0150</span><span class="hb"><span class="hs">82 7c 82 7d 82 7d 81 7d  81 7d 81 7d 81 7d 81 7d</span></span></div>
<div class="hrow" style="top:1093px"><span class="ho">0160</span><span class="hb"><span class="hs">81 7d 81 7d 81 7d 82 7d  82 7c 82 7c 82 7c 82 7c</span></span></div>
<div class="hrow" style="top:1111px"><span class="ho">0170</span><span class="hb"><span class="hs">82 7d 82 7d 82 7d 82 7d  82 7d 82 7c 82 7c 82 7c</span></span></div>
<div class="hrow" style="top:1129px"><span class="ho">0180</span><span class="hb"><span class="hs">82 7c 82 7c 82 7c 82 7c  82 7c 82 7d 82 7d 82 7d</span></span></div>
<div class="hrow" style="top:1147px"><span class="ho">0190</span><span class="hb"><span class="hs">83 7d 83 7d 83 7d 83 7c  82 7c 82 7c 82 7c 82 7c</span></span></div>
<div class="hrow" style="top:1165px"><span class="ho">01a0</span><span class="hb"><span class="hs">83 7c 83 7c 83 7c 83 7c  83 7c 83 7c 83 7c 83 7c</span></span></div>
<div class="hrow" style="top:1183px"><span class="ho">01b0</span><span class="hb"><span class="hs">83 7c 84 7c 83 7c 84 7b  84 7b 84 7b 84 7b 84 7b</span></span></div>
<div class="hrow" style="top:1201px"><span class="ho">01c0</span><span class="hb"><span class="hs">85 7c 85 7c 85 7c 85 7b  85 7b 85 7b 85 7b 85 7b</span></span></div>
<div class="hrow" style="top:1219px"><span class="ho">01d0</span><span class="hb"><span class="hs">85 7b 85 7b 85 7b 85 7b  85 7b 85 7b 85 7b 85 7b</span></span></div>
<div class="hrow" style="top:1237px"><span class="ho">01e0</span><span class="hb"><span class="hs">86 7b 86 7b 86 7a 86 7a  86 79 86 79 86 79 86 79</span></span></div>
<div class="hrow" style="top:1255px"><span class="ho">01f0</span><span class="hb"><span class="hs">86 7a 87 7a 87 7a 87 7a  87 79 87 79 87 79 87 79</span></span></div>
<div class="hrow" style="top:1273px"><span class="ho">0200</span><span class="hb"><span class="hs">88 79 88 79 88 79 88 78  88 78 88 78 88 78 88 78</span></span></div>
<div class="hrow" style="top:1291px"><span class="ho">0210</span><span class="hb"><span class="hs">88 78 88 78 88 78 89 77  89 77 89 77 89 77 89 77</span></span></div>
<div class="hrow" style="top:1309px"><span class="ho">0220</span><span class="hb"><span class="hs">89 77 89 77 89 77 89 77  8a 77 8a 76 8a 76 8a 76</span></span><span class="as">·w·w·w·w ·w·v·v·v</span></div>
<div class="hrow" style="top:1327px"><span class="ho">0230</span><span class="hb"><span class="hs">8a 76 8a 77 8a 77 8a 77  8a 77 8a 77 8a 77 8a 77</span></span><span class="as">·v·w·w·w ·w·w·w·w</span></div>
<div class="hrow" style="top:1345px"><span class="ho">0240</span><span class="hb"><span class="hs">8b 76 8b 76 8b 76 8b 76  8b 75 8b 75 8b 75 8b 75</span></span><span class="as">·v·v·v·v ·u·u·u·u</span></div>
<div class="hrow" style="top:1363px"><span class="ho">0250</span><span class="hb"><span class="hs">8b 75 8c 75 8c 75 8c 75  8c 74 8c 74 8c 74 8c 74</span></span><span class="as">·u·u·u·u ·t·t·t·t</span></div>
<div class="hrow" style="top:1381px"><span class="ho">0260</span><span class="hb"><span class="hs">8d 74 8d 74 8d 74 8d 74  8d 74 8d 74 8d 73 8d 73</span></span><span class="as">·t·t·t·t ·t·t·s·s</span></div>
<div class="abs" style="left:72px;top:696px;width:1px;height:717px;background:#b0b0b0"></div>
<div class="abs" style="left:2541px;top:696px;width:19px;height:717px;background:#e6e6e6;border-left:1px solid #bdbdbd"></div>
<div class="abs" style="left:2542px;top:697px;width:17px;height:17px;background:#fbfbfb;border-bottom:1px solid #d0d0d0"></div>
<svg class="abs" style="left:2545px;top:702px" width="10" height="6"><path d="M0 6h10L5 0z" fill="#444"/></svg>
<div class="abs" style="left:2542px;top:714px;width:17px;height:682px;background:linear-gradient(90deg,#fff,#f0f0f0)"></div>
<div class="abs" style="left:2542px;top:1396px;width:17px;height:17px;background:#fbfbfb;border-top:1px solid #d0d0d0"></div>
<svg class="abs" style="left:2545px;top:1401px" width="10" height="6"><path d="M0 0h10L5 6z" fill="#444"/></svg>
<!-- status -->
<div class="abs" style="left:72px;top:1415px;width:2488px;height:25px;background:#efefef;border-top:1px solid #c2c2c2"></div>
<svg class="abs" style="left:81px;top:1420px" width="16" height="16" viewBox="0 0 16 16"><defs><radialGradient id="yb" cx=".4" cy=".35" r=".7"><stop offset="0" stop-color="#f4f0a0"/><stop offset="1" stop-color="#d8d040"/></radialGradient></defs><circle cx="8" cy="8" r="7" fill="url(#yb)" stroke="#8c8a3c" stroke-width="0.9"/></svg>
<svg class="abs" style="left:107px;top:1420px" width="15" height="15" viewBox="0 0 15 15"><rect x="0.5" y="1.5" width="11" height="13" fill="#f4f4f4" stroke="#b8b8b8"/><path d="M0.5 1.5h8l-2 3h-6z" fill="#4aa0e8"/><path d="M2 5.5h7M2 8h7M2 10.5h7" stroke="#ccc" stroke-width="0.8"/><path d="M4.5 11.5 L13 3 L14.5 4.5 L6 13 L4 13.5Z" fill="#444"/></svg>
<div class="abs st" style="left:141px">wireshark_enp4s0_20240313180547_AZwr5c.pcapng</div>
<div class="abs" style="left:1708px;top:1418px;width:1px;height:20px;border-left:1px dotted #aaa"></div>
<div class="abs st" style="left:1724px">Packets: 766069 · Displayed: 766069 (100.0%) · Dropped: 0 (0.0%)</div>
<div class="abs" style="left:2417px;top:1418px;width:1px;height:20px;border-left:1px dotted #aaa"></div>
<div class="abs st" style="left:2434px">Profile: Default</div>
<!-- HVIZ WINDOW -->
<div id="hv"></div>
<div id="hvtitle" style="left:507px;top:198px"></div>
<div class="abs" style="left:1262px;top:198px;line-height:37px;color:#fff;font-weight:bold;font-size:20px">Hviz V1.5.2</div>
<div class="abs" style="left:2031px;top:218px;width:8px;height:2px;background:#fff"></div>
<div class="abs" style="left:2065px;top:212px;width:8.5px;height:8.5px;border:1.5px solid #fff"></div>
<svg class="abs" style="left:2093px;top:206px" width="20" height="20" viewBox="0 0 20 20"><circle cx="10" cy="10" r="9.3" fill="#e95420"/><path d="M5.8 5.8l8.4 8.4M14.2 5.8l-8.4 8.4" stroke="#fff" stroke-width="1.4"/></svg>
<!-- menu -->
<div class="abs" style="left:507px;top:234px;width:1614px;height:1px;background:#1c1c1c"></div>
<div class="abs" style="left:507px;top:235px;width:1614px;height:33px;background:#f6f6f6"></div>
<div class="abs hm" style="left:515px">Hviz</div>
<div class="abs hm" style="left:570px">Layout</div>
<div class="abs hm" style="left:650px">Data source</div>
<!-- left panel -->
<div class="abs" style="left:507px;top:268px;width:469px;height:67px;background:#f5f5f5;border-bottom:1px solid #e2e2e2"></div>
<div class="abs" style="left:976px;top:268px;width:3px;height:66px;background:#f6f6f6"></div><div class="abs" style="left:976px;top:334px;width:3px;height:977px;background:#f2f2f2"></div>
<div class="abs ht" style="left:544px;top:268px;line-height:64px">Panel</div>
<div class="abs ht" style="left:650px;top:268px;line-height:64px">DataSource</div>
<div class="abs ht" style="left:803px;top:268px;line-height:64px;color:#3d63dd">Topics</div>
<div class="abs" style="left:768px;top:331px;width:121px;height:3px;background:#3d63dd"></div>
<div class="abs" style="left:521px;top:350px;font-size:20px;line-height:24px;color:#2a2a2a;white-space:nowrap;letter-spacing:0.4px">camera_0#-1</div>
<div class="abs" style="left:521px;top:380px;font-size:16px;line-height:18px;color:#888;white-space:nowrap">GroupId: 0</div>
<div class="abs" style="left:521px;top:404px;font-size:16px;line-height:18px;color:#888;white-space:nowrap">Type: ImageProto.Image</div>
<div class="abs" style="left:520px;top:429px;width:456px;height:1px;background:#e4e4e4"></div>
<!-- right panel -->
<div class="abs" style="left:979px;top:268px;width:1142px;height:41px;background:#f6f6f6;border-bottom:1px solid #e2e2e2"></div>
<div class="abs" style="left:1231px;top:269px;width:146px;height:39px;background:#e6e6e6"></div>
<div class="abs ht" style="left:1031px;top:269px;line-height:40px;font-size:17px">3D</div>
<div class="abs ht" style="left:1144px;top:269px;line-height:40px;font-size:17px">Image</div>
<div class="abs ht" style="left:1248px;top:269px;line-height:40px;font-size:17px;color:#555;letter-spacing:0.2px">Raw Messages</div>
<svg class="abs" style="left:2026px;top:279px" width="19" height="19" viewBox="0 0 24 24"><path fill="#6e6e6e" d="M19.14 12.94c.04-.3.06-.61.06-.94 0-.32-.02-.64-.07-.94l2.03-1.58a.49.49 0 0 0 .12-.61l-1.92-3.32a.488.488 0 0 0-.59-.22l-2.39.96c-.5-.38-1.03-.7-1.62-.94l-.36-2.54a.484.484 0 0 0-.48-.41h-3.84c-.24 0-.43.17-.47.41l-.36 2.54c-.59.24-1.13.57-1.62.94l-2.39-.96c-.22-.08-.47 0-.59.22L2.74 8.87c-.12.21-.08.47.12.61l2.03 1.58c-.05.3-.09.63-.09.94s.02.64.07.94l-2.03 1.58a.49.49 0 0 0-.12.61l1.92 3.32c.12.22.37.29.59.22l2.39-.96c.5.38 1.03.7 1.62.94l.36 2.54c.05.24.24.41.48.41h3.84c.24 0 .44-.17.47-.41l.36-2.54c.59-.24 1.13-.56 1.62-.94l2.39.96c.22.08.47 0 .59-.22l1.92-3.32c.12-.22.07-.47-.12-.61l-2.01-1.58zM12 15.6c-1.98 0-3.6-1.62-3.6-3.6s1.62-3.6 3.6-3.6 3.6 1.62 3.6 3.6-1.62 3.6-3.6 3.6z"/></svg>
<svg class="abs" style="left:2061px;top:281px" width="15" height="15" viewBox="0 0 15 15"><path d="M7.5 0.5v14M0.5 7.5h14" stroke="#6e6e6e" stroke-width="1.8"/></svg>
<svg class="abs" style="left:2099px;top:280px" width="6" height="17" viewBox="0 0 6 17"><circle cx="3" cy="2.2" r="1.6" fill="#6e6e6e"/><circle cx="3" cy="8.5" r="1.6" fill="#6e6e6e"/><circle cx="3" cy="14.8" r="1.6" fill="#6e6e6e"/></svg>
<!-- topic select -->
<div class="abs" style="left:999px;top:330px;width:943px;height:53px;border:1px solid #c4c4c4;border-radius:5px"></div>
<div class="abs" style="left:1011px;top:326px;width:50px;height:8px;background:#fff"></div>
<div class="abs" style="left:1018px;top:318px;font-size:15px;line-height:18px;color:#666;white-space:nowrap;letter-spacing:0.5px">Topic</div>
<div class="abs" style="left:1018px;top:343px;font-size:20px;line-height:24px;color:#111;white-space:nowrap;letter-spacing:0.85px">camera_0#-1/0</div>
<svg class="abs" style="left:1906px;top:353px" width="14" height="7"><path d="M0 0h14L7 7z" fill="#757575"/></svg>
<div class="abs" style="left:1956px;top:350px;width:30px;height:13px;border-radius:7px;background:#90bae8"></div>
<div class="abs" style="left:1974px;top:346px;width:22px;height:22px;border-radius:11px;background:#2475d3;box-shadow:0 1px 2px rgba(0,0,0,.35)"></div>
<div class="abs" style="left:2002px;top:343px;font-size:20.5px;line-height:24px;color:#111;white-space:nowrap;letter-spacing:0.4px">Realtime</div>
<!-- json -->
<div class="abs" style="left:1007px;top:425px;width:1px;height:138px;background:#e6e6e6"></div>
<svg class="abs" style="left:1002px;top:409px" width="14" height="8"><path d="M0 0h14L7 8z" fill="#4a6a70"/></svg>
<svg class="abs" style="left:1037px;top:430px" width="8" height="13"><path d="M0 0v13l8-6.5z" fill="#2a9d8f"/></svg>
<svg class="abs" style="left:1037px;top:458px" width="8" height="13"><path d="M0 0v13l8-6.5z" fill="#2a9d8f"/></svg>
<div class="jk" style="left:1022px;top:406px">"root"</div><div class="jk" style="left:1096px;top:406px">:</div><div class="jk jb" style="left:1113px;top:406px">{</div><div class="jk ji" style="left:1137px;top:406px">5 items</div>
<div class="jk" style="left:1058px;top:431px">"roi_map"</div><div class="jk" style="left:1166px;top:431px">:</div><div class="jk jb" style="left:1184px;top:431px">[]</div><div class="jk ji" style="left:1218px;top:431px">0 items</div>
<div class="jk" style="left:1058px;top:459px">"related_sensor_frames"</div><div class="jk" style="left:1323px;top:459px">:</div><div class="jk jb" style="left:1339px;top:459px">[]</div><div class="jk ji" style="left:1374px;top:459px">0 items</div>
<div class="jk" style="left:1035px;top:487px">"height"</div><div class="jk" style="left:1132px;top:487px">:</div><div class="jint" style="left:1148px;top:490px">int</div><div class="jv" style="left:1181px;top:486px">1799393796</div>
<div class="jk" style="left:1035px;top:515px">"depth"</div><div class="jk" style="left:1120px;top:515px">:</div><div class="jint" style="left:1137px;top:518px">int</div><div class="jv" style="left:1169px;top:514px">2</div>
<div class="jk" style="left:1035px;top:543px">"align"</div><div class="jk" style="left:1120px;top:543px">:</div><div class="jint" style="left:1137px;top:546px">int</div><div class="jv" style="left:1169px;top:542px">0</div>
<div class="jk jb" style="left:1002px;top:567px">}</div>
<div class="abs" style="left:506px;top:235px;width:1616px;height:1077px;border:1px solid rgba(0,0,0,.33);border-top:none;pointer-events:none"></div>

</body></html>
